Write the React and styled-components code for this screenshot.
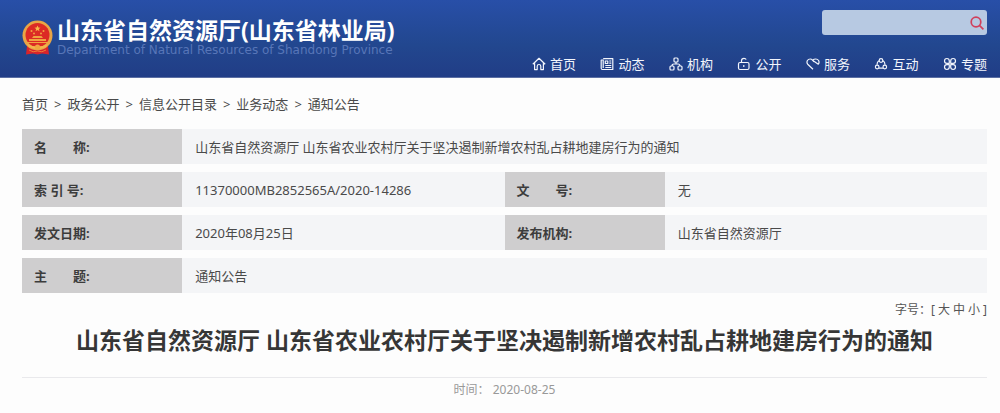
import React, { useState } from "react";
import styled, { createGlobalStyle } from "styled-components";

const GlobalStyle = createGlobalStyle`
  *, *::before, *::after { box-sizing: border-box; }
  body {
    margin: 0;
    background: #fdfdfd;
    color: #4a4a4a;
    font-family: "Noto Sans", "Noto Sans CJK SC", sans-serif;
    font-size: 13px;
    line-height: 20px;
  }
`;

const Header = styled.header`
  display: flex;
  justify-content: space-between;
  padding: 10px 13px 0 22px;
  background: linear-gradient(#284fa8 0%, #22478f 58%, #213d86 100%);
  border-bottom: 1px solid #5c6fa3;
`;

const Brand = styled.a`
  display: flex;
  align-items: flex-end;
  align-self: flex-start;
  gap: 4px;
  padding-top: 7px;
  color: #fff;
  text-decoration: none;
`;

const BrandText = styled.span`
  display: flex;
  flex-direction: column;
`;

const BrandName = styled.strong`
  font-size: 23px;
  line-height: 27px;
  font-weight: 700;
  white-space: nowrap;
`;

const BrandLatin = styled.span`
  font-family: "DejaVu Sans", sans-serif;
  font-size: 12px;
  line-height: 12px;
  color: #5876b8;
  white-space: nowrap;
`;

const HeaderSide = styled.div`
  display: flex;
  flex-direction: column;
  align-items: flex-end;
  gap: 19px;
`;

const SearchForm = styled.form`
  display: flex;
  width: 165px;
  height: 25px;
  border-radius: 3px;
  background: #b7c9e2;
`;

const SearchInput = styled.input`
  flex: 1;
  min-width: 0;
  padding: 0 8px;
  border: 0;
  outline: 0;
  background: none;
  font: inherit;
  color: #333;
`;

const SearchButton = styled.button`
  display: flex;
  align-items: center;
  padding: 0 3px;
  border: 0;
  background: none;
  color: #d0405c;
  cursor: pointer;
`;

const Nav = styled.nav`
  display: flex;
  justify-content: space-between;
  width: 455px;
  padding-bottom: 3px;
`;

const NavLink = styled.a`
  display: flex;
  align-items: center;
  gap: 4px;
  color: #f2f5fc;
  text-decoration: none;
`;

const Main = styled.main`
  padding: 16px 13px 14px 22px;
`;

const Crumbs = styled.nav`
  display: flex;
  gap: 6px;
`;

const CrumbLink = styled.a`
  color: inherit;
  text-decoration: none;
`;

const InfoTable = styled.table`
  width: 100%;
  margin-top: 7px;
  table-layout: fixed;
  border-collapse: separate;
  border-spacing: 0 8px;
`;

const LabelCell = styled.th`
  height: 35px;
  padding: 0 12px;
  background: #cfcecf;
  color: #3c3c3c;
  text-align: left;
  font-weight: 700;
`;

const ValueCell = styled.td`
  height: 35px;
  padding: 0 12px 0 13px;
  background: #f4f5f7;
`;

const LabelCol = styled.col`
  width: 16.6%;
`;

const SizeBar = styled.div`
  display: flex;
  justify-content: flex-end;
  gap: 3px;
  font-size: 12px;
  line-height: 18px;
  color: #555;
`;

const SizeButton = styled.button`
  padding: 0;
  border: 0;
  background: none;
  font: inherit;
  color: inherit;
  cursor: pointer;
`;

const Title = styled.h1`
  margin: 0;
  padding: 2px 0 18px;
  border-bottom: 1px solid #e9e9ec;
  color: #363636;
  font-size: ${(p) => p.$size}px;
  line-height: 38px;
  font-weight: 700;
  text-align: center;
`;

const Meta = styled.p`
  margin: 3px 0 0;
  font-size: 12px;
  line-height: 18px;
  color: #999;
  text-align: center;
`;

function Emblem() {
  return (
    <svg width="31" height="36" viewBox="0 0 31 36" aria-hidden="true">
      <path d="M5 26 4 34.500 11 33.500 15.500 34.500 20 33.500 27 34.500 26 26Z" fill="#d9242b" />
      <circle cx="15.500" cy="15.500" r="15" fill="#e8a545" />
      <circle cx="15.500" cy="15" r="12" fill="#dc2a25" />
      <path d="M15.500 5.500l.9 2 2.100.2-1.600 1.400.5 2.100-1.900-1.100-1.900 1.100.5-2.100-1.600-1.400 2.100-.2z" fill="#f7b94a" />
      <g fill="#f0a340">
        <circle cx="9.500" cy="11" r="1" />
        <circle cx="12" cy="13.500" r="1" />
        <circle cx="19" cy="13.500" r="1" />
        <circle cx="21.500" cy="11" r="1" />
        <path d="M10 18h11l-1.500-2h-8zM7 21h17v-2H7zM5 23h21v-1H5z" />
      </g>
      <path d="M5 24q10.500 5 21 0l-2 3q-8.500 4-17 0z" fill="#f3b74c" />
      <circle cx="15.500" cy="27" r="2.600" fill="#f1a63f" />
      <path d="M7 30q4 3 8.500 1 4.500 2 8.500-1" fill="none" stroke="#ef7b35" />
    </svg>
  );
}

const icons = {
  home: <path d="M.8 7.300 7 1.300l6.200 6M2.600 6.300v6.300h2.600V9.200q0-1.700 1.800-1.700t1.800 1.700v3.400h2.600V6.300" />,
  news: (
    <>
      <path d="M3.200 1.600h9.600v10.900H2.400q-1.200 0-1.200-1.200V3h2v8" />
      <path d="M5.300 4h2.500v2.500H5.300zM9.300 4h2M9.300 6.200h2M5.300 8.500h6M5.300 10.500h6" />
    </>
  ),
  org: (
    <>
      <rect x="5" y="1" width="4" height="4" rx="1" />
      <rect x="1" y="9" width="4" height="4" rx="1" />
      <rect x="9" y="9" width="4" height="4" rx="1" />
      <path d="M7 5v2M3 9q0-2 2-2h4q2 0 2 2" />
    </>
  ),
  open: (
    <>
      <rect x="1.500" y="5.500" width="10.500" height="7" rx="1.500" />
      <path d="M4.500 5.500V3.800Q4.500 1.300 7 1.300q1.600 0 2.200 1.200M6.800 8v2" />
    </>
  ),
  service: <path d="M7 12.300 1.700 7.200Q.4 5.400 1.400 3.500 2.400 2 4.200 2 5.500 2 6.500 3.200L8 4.800M6.500 3.200Q8 2 9.800 2q1.800 0 2.800 1.500 1 1.900-.3 3.700z" />,
  interact: (
    <>
      <path d="M3 7.800Q3 4.800 5 3.800M9 3.800q2 1 2 4M5 11.200h4" />
      <circle cx="7" cy="3.500" r="1.800" />
      <circle cx="3.200" cy="10" r="1.800" />
      <circle cx="10.800" cy="10" r="1.800" />
    </>
  ),
  topic: (
    <path d="M6.300 6.300H3.900a2.400 2.400 0 1 1 2.400-2.400zM7.700 6.300V3.900a2.400 2.400 0 1 1 2.400 2.400zM6.300 7.700v2.400a2.400 2.400 0 1 1-2.400-2.400zM7.700 7.700h2.400a2.400 2.400 0 1 1-2.400 2.400z" />
  ),
};

function NavIcon({ name }) {
  return (
    <svg width="14" height="14" viewBox="0 0 14 14" fill="none" stroke="currentColor" strokeWidth="1.200" strokeLinejoin="round" aria-hidden="true">
      {icons[name]}
    </svg>
  );
}

const navItems = [
  ["home", "首页"],
  ["news", "动态"],
  ["org", "机构"],
  ["open", "公开"],
  ["service", "服务"],
  ["interact", "互动"],
  ["topic", "专题"],
];

const crumbs = ["首页", "政务公开", "信息公开目录", "业务动态", "通知公告"];

const infoRows = [
  [["名　　称:", "山东省自然资源厅 山东省农业农村厅关于坚决遏制新增农村乱占耕地建房行为的通知"]],
  [["索 引 号:", "11370000MB2852565A/2020-14286"], ["文　　号:", "无"]],
  [["发文日期:", "2020年08月25日"], ["发布机构:", "山东省自然资源厅"]],
  [["主　　题:", "通知公告"]],
];

const titleSizes = [["大", 25], ["中", 23], ["小", 21]];

export default function App() {
  const [titleSize, setTitleSize] = useState(23);
  return (
    <>
      <GlobalStyle />
      <Header>
        <Brand href="#">
          <Emblem />
          <BrandText>
            <BrandName>山东省自然资源厅(山东省林业局)</BrandName>
            <BrandLatin>Department of Natural Resources of Shandong Province</BrandLatin>
          </BrandText>
        </Brand>
        <HeaderSide>
          <SearchForm role="search" onSubmit={(e) => e.preventDefault()}>
            <SearchInput type="text" aria-label="搜索" />
            <SearchButton type="submit" aria-label="搜索">
              <svg width="14" height="14" viewBox="0 0 14 14" fill="none" stroke="currentColor" strokeWidth="1.700" aria-hidden="true">
                <circle cx="6" cy="6" r="4.800" />
                <path d="m9.400 9.400 4 4" />
              </svg>
            </SearchButton>
          </SearchForm>
          <Nav>
            {navItems.map(([icon, label]) => (
              <NavLink href="#" key={icon}>
                <NavIcon name={icon} />
                {label}
              </NavLink>
            ))}
          </Nav>
        </HeaderSide>
      </Header>
      <Main>
        <Crumbs>
          {crumbs.map((name, i) => (
            <React.Fragment key={name}>
              {i > 0 && <span>&gt;</span>}
              <CrumbLink href="#">{name}</CrumbLink>
            </React.Fragment>
          ))}
        </Crumbs>
        <InfoTable>
          <colgroup>
            <LabelCol />
            <col />
            <LabelCol />
            <col />
          </colgroup>
          <tbody>
            {infoRows.map((row) => (
              <tr key={row[0][0]}>
                {row.map(([label, value]) => (
                  <React.Fragment key={label}>
                    <LabelCell scope="row">{label}</LabelCell>
                    <ValueCell colSpan={row.length === 1 ? 3 : 1}>{value}</ValueCell>
                  </React.Fragment>
                ))}
              </tr>
            ))}
          </tbody>
        </InfoTable>
        <SizeBar>
          <span>字号：[</span>
          {titleSizes.map(([label, size]) => (
            <SizeButton type="button" key={label} onClick={() => setTitleSize(size)}>
              {label}
            </SizeButton>
          ))}
          <span>]</span>
        </SizeBar>
        <Title $size={titleSize}>山东省自然资源厅 山东省农业农村厅关于坚决遏制新增农村乱占耕地建房行为的通知</Title>
        <Meta>时间： 2020-08-25</Meta>
      </Main>
    </>
  );
}
